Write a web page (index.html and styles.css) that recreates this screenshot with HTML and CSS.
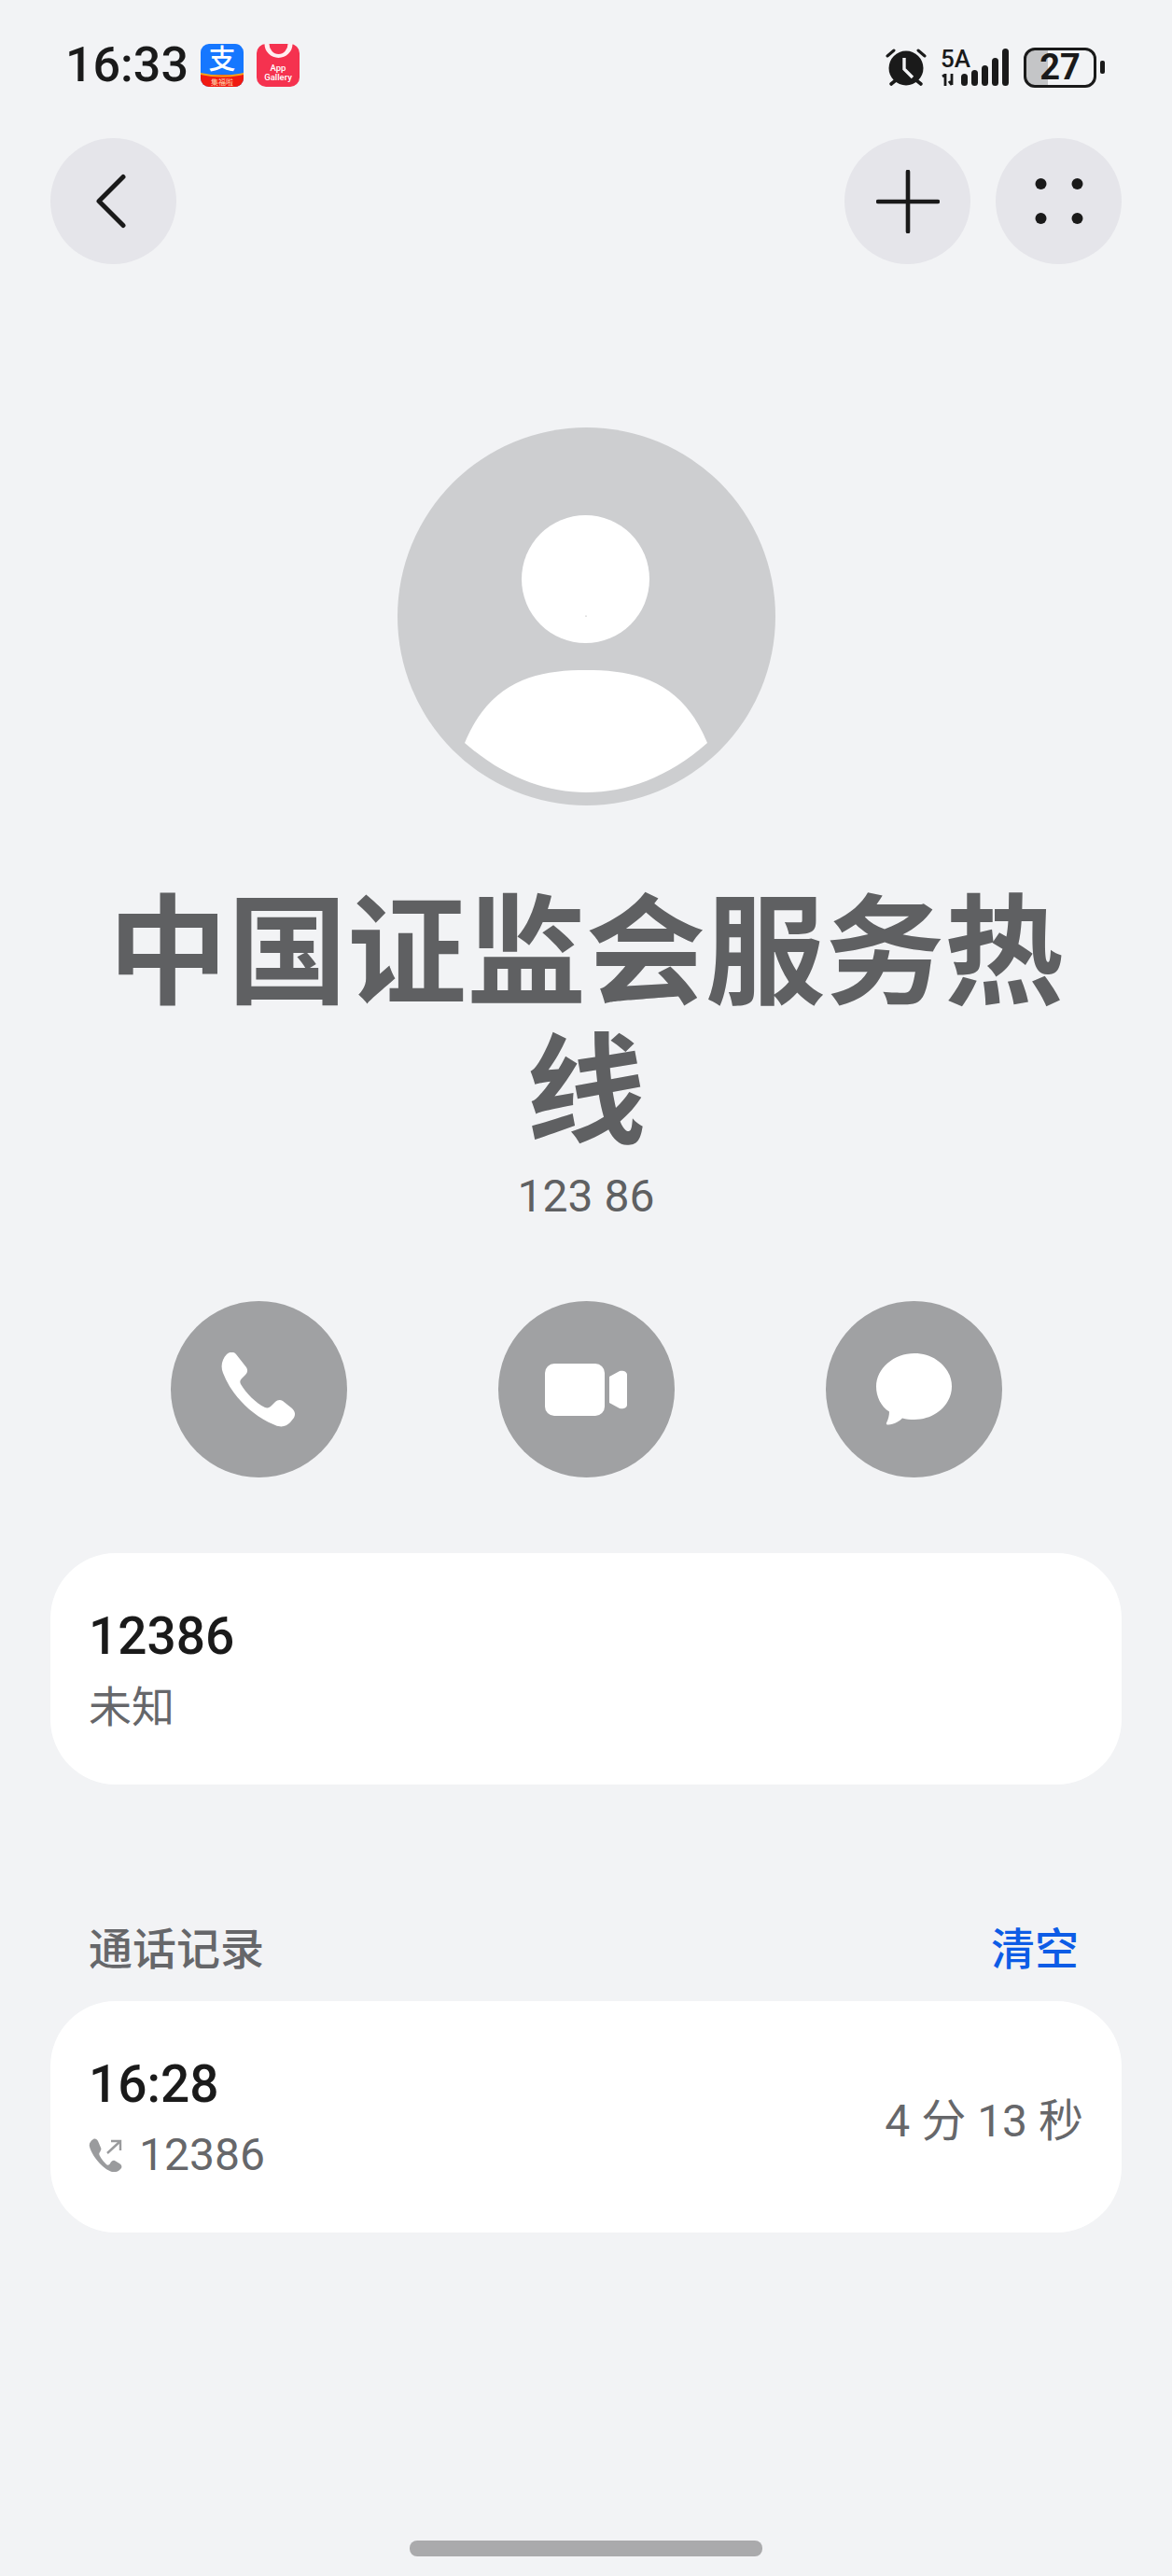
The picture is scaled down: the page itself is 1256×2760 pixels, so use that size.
FILE: index.html
```html
<!DOCTYPE html>
<html>
<head>
  <title>通话详情</title>
  <meta name="viewport" content="width=device-width, initial-scale=1.0">
  <link rel="stylesheet" href="styles.css">
</head>
<body>
  <div class="phone">

    <!-- Status bar -->
    <div class="status-bar">
      <div class="status-left">
        <span class="clock">16:33</span>
        <svg class="app-icon" viewBox="0 0 46 46">
          <rect width="46" height="46" rx="9" fill="#1677ff"/>
          <path d="M0 33h46v4a9 9 0 0 1-9 9H9a9 9 0 0 1-9-9z" fill="#f01a12"/>
          <path d="M0 31q23 5 46 0v2q-23 5-46 0z" fill="#f7a21b"/>
          <text x="23" y="27" text-anchor="middle" class="app-icon-glyph">支</text>
          <text x="23" y="44" text-anchor="middle" class="app-icon-tiny">集福啦</text>
        </svg>
        <svg class="app-icon" viewBox="0 0 46 46">
          <rect width="46" height="46" rx="10" fill="#f5324f"/>
          <path d="M8.500 0a15 15 0 0 0 30 0h-5a10 11 0 0 1-20 0z" fill="#fff" opacity=".92"/>
          <text x="23" y="29" text-anchor="middle" class="app-icon-label">App</text>
          <text x="23" y="38.500" text-anchor="middle" class="app-icon-label">Gallery</text>
        </svg>
      </div>
      <div class="status-right">
        <svg class="alarm" viewBox="0 0 44 42">
          <path d="M2 9l7-6M42 9l-7-6" stroke="#1a1a1a" stroke-width="3" stroke-linecap="round" fill="none"/>
          <path d="M6 39l5-4M38 39l-5-4" stroke="#1a1a1a" stroke-width="3.600" stroke-linecap="round" fill="none"/>
          <circle cx="22" cy="22" r="18.500" fill="#1a1a1a"/>
          <path d="M20 11v12l9 9" stroke="#f2f3f5" stroke-width="3.400" fill="none"/>
        </svg>
        <div class="signal">
          <div class="signal-text">
            <span class="signal-type">5A</span>
            <svg class="signal-arrows" viewBox="0 0 16 13">
              <path d="M2 3l3-2v12M12 0v12M9 8l3 4" stroke="#1a1a1a" stroke-width="2.800" fill="none"/>
            </svg>
          </div>
          <div class="signal-bars">
            <i class="bar bar-1"></i>
            <i class="bar bar-2"></i>
            <i class="bar bar-3"></i>
            <i class="bar bar-4"></i>
            <i class="bar bar-5"></i>
          </div>
        </div>
        <div class="battery">
          <div class="battery-body"><span class="battery-level">27</span></div>
          <div class="battery-cap"></div>
        </div>
      </div>
    </div>

    <!-- Top buttons -->
    <div class="top-bar">
      <div class="round-btn">
        <svg width="40" height="60" viewBox="0 0 40 60">
          <path d="M30 3.500L4 29.500l26 26" stroke="#1a1a1a" stroke-width="5" stroke-linecap="round" stroke-linejoin="round" fill="none"/>
        </svg>
      </div>
      <div class="top-actions">
        <div class="round-btn">
          <svg width="68" height="68" viewBox="0 0 68 68">
            <path d="M34 2v64M2 34h64" stroke="#1a1a1a" stroke-width="4.600" stroke-linecap="round" fill="none"/>
          </svg>
        </div>
        <div class="round-btn">
          <svg width="52" height="50" viewBox="0 0 52 50">
            <circle cx="6.500" cy="6" r="6" fill="#1a1a1a"/>
            <circle cx="45.500" cy="6" r="6" fill="#1a1a1a"/>
            <circle cx="6.500" cy="43" r="6" fill="#1a1a1a"/>
            <circle cx="45.500" cy="43" r="6" fill="#1a1a1a"/>
          </svg>
        </div>
      </div>
    </div>

    <!-- Contact header -->
    <div class="contact">
      <svg class="avatar" viewBox="0 0 405 405">
        <circle cx="202.500" cy="202.500" r="202.500" fill="#cdced0"/>
        <circle cx="201.500" cy="162.500" r="68.500" fill="#fff"/>
        <circle cx="202" cy="202" r=".6" fill="#999"/>
        <path d="M72 338C100 270 150 260 202 260S304 270 332 338C290 375 245 391 202 391s-88-16-130-53z" fill="#fff"/>
      </svg>
      <h1 class="contact-name">中国证监会服务热线</h1>
      <div class="contact-number">123 86</div>
    </div>

    <!-- Call, video, message -->
    <div class="actions">
      <div class="action-btn">
        <svg width="80" height="80" viewBox="0 0 80 80">
          <path d="M6 2C9-1 14-1 16 2L27 16C29 19 28 22 26 24L22 28C20 30 20 32 21 34 27 44 37 54 47 59 50 60 52 59 54 57L58 53C60 51 63 50 66 52L76 60C79 63 80 66 78 70L74 75C70 79 65 81 58 78 33 68 11 46 2 22-1 15 1 7 6 2z" fill="#fff"/>
        </svg>
      </div>
      <div class="action-btn">
        <svg width="88" height="56" viewBox="0 0 88 56">
          <rect x="0" y="0" width="64" height="56" rx="10" fill="#fff"/>
          <path d="M69 14l11-6c3-1 8 0 8 4v32c0 4-5 5-8 4l-11-6z" fill="#fff"/>
        </svg>
      </div>
      <div class="action-btn">
        <svg width="81" height="77" viewBox="0 0 81 77">
          <path d="M41 0c22 0 40 16 40 35.500S63 71 41 71c-5 0-9-.5-13-1.500-4 4-10 7-15 7-2 0-2.500-1-2-2 2-4 3-8 3-12C5 57 0 46 0 35.500 0 16 19 0 41 0z" fill="#fff"/>
        </svg>
      </div>
    </div>

    <!-- Number card -->
    <div class="card">
      <div class="card-text">
        <div class="card-title">12386</div>
        <div class="card-sub">未知</div>
      </div>
    </div>

    <!-- Call log -->
    <div class="section-head">
      <span class="section-title">通话记录</span>
      <span class="section-link">清空</span>
    </div>
    <div class="card card-log">
      <div class="card-text">
        <div class="card-title">16:28</div>
        <div class="card-sub card-sub-log">
          <svg class="call-out" viewBox="0 0 36 36">
            <path d="M5 1c2-1 4 0 5 2l3 7c1 2 0 3-1 5-1 1-1 2 0 4 2 4 5 7 7 9 1 1 3 1 4-1 1-2 3-4 5-3l5 3c2 1 3 3 2 5-2 3-6 5-10 4C15 33 3 18 1 9 0 6 2 3 5 1z" fill="#9a9b9d"/>
            <path d="M20 16L33 4M24 3h10v10" stroke="#9a9b9d" stroke-width="2.400" fill="none"/>
          </svg>
          <span>12386</span>
        </div>
      </div>
      <div class="call-length">4 分 13 秒</div>
    </div>

    <div class="home-bar"></div>
  </div>
</body>
</html>
```

FILE: styles.css
```css
/* Reset */
body, h1 {
  margin: 0;
  padding: 0;
}

body {
  font-family: Roboto, "Noto Sans CJK SC", sans-serif;
  background-color: #f2f3f5;
  color: #1a1a1a;
}

.phone {
  width: 1256px;
  height: 2760px;
  overflow: hidden;
  display: flex;
  flex-direction: column;
}

/* Status bar */
.status-bar {
  height: 140px;
  padding: 40px 72px 0 70px;
  box-sizing: border-box;
  display: flex;
  justify-content: space-between;
  align-items: flex-start;
}

.status-left {
  display: flex;
  align-items: center;
  height: 60px;
}

.clock {
  font-size: 52px;
  font-weight: 500;
  line-height: 60px;
  margin-right: 13px;
}

.app-icon {
  width: 46px;
  height: 46px;
  margin-right: 14px;
  overflow: visible;
}

.app-icon-glyph {
  font-size: 29px;
  font-weight: 500;
  fill: #fff;
  font-family: "Noto Sans CJK SC", sans-serif;
}

.app-icon-tiny {
  font-size: 8px;
  fill: #ffd9b0;
  font-family: "Noto Sans CJK SC", sans-serif;
}

.app-icon-label {
  font-size: 9.500px;
  font-weight: 500;
  fill: #fff;
}

.status-right {
  display: flex;
  align-items: center;
  height: 60px;
  margin-top: 2px;
}

.alarm {
  width: 44px;
  height: 42px;
  margin-right: 15px;
}

.signal {
  display: flex;
  align-items: flex-end;
  margin-right: 16px;
}

.signal-text {
  display: flex;
  flex-direction: column;
  width: 22px;
}

.signal-type {
  font-size: 26px;
  line-height: 22px;
  font-weight: 500;
}

.signal-arrows {
  width: 16px;
  height: 13px;
  margin-top: 5px;
}

.signal-bars {
  display: flex;
  align-items: flex-end;
  gap: 4px;
}

.bar {
  display: block;
  width: 7px;
  background-color: #1a1a1a;
  border-radius: 3.500px;
}

.bar-1 { height: 13px; }
.bar-2 { height: 17px; }
.bar-3 { height: 22px; }
.bar-4 { height: 30px; }
.bar-5 { height: 40px; }

.battery {
  display: flex;
  align-items: center;
}

.battery-body {
  width: 78px;
  height: 43px;
  box-sizing: border-box;
  border: 3.500px solid #1a1a1a;
  border-radius: 12px;
  background: linear-gradient(to right, #c4c5c7 32%, transparent 32%);
  display: flex;
  align-items: center;
  justify-content: center;
}

.battery-level {
  font-size: 38px;
  font-weight: 700;
  line-height: 36px;
}

.battery-cap {
  width: 5px;
  height: 14px;
  margin-left: 4px;
  background-color: #1a1a1a;
  border-radius: 2px;
}

/* Top buttons */
.top-bar {
  padding: 8px 54px 0 54px;
  display: flex;
  justify-content: space-between;
}

.top-actions {
  display: flex;
  gap: 27px;
}

.round-btn {
  width: 135px;
  height: 135px;
  border-radius: 50%;
  background-color: #e5e5ea;
  display: flex;
  align-items: center;
  justify-content: center;
}

/* Contact header */
.contact {
  display: flex;
  flex-direction: column;
  align-items: center;
  padding-top: 175px;
}

.avatar {
  width: 405px;
  height: 405px;
  display: block;
}

.contact-name {
  width: 1040px;
  margin-top: 73px;
  font-size: 128px;
  line-height: 149px;
  font-weight: 700;
  color: #5f6062;
  text-align: center;
  font-family: "Noto Sans CJK SC", sans-serif;
}

.contact-number {
  margin-top: 20px;
  font-size: 48px;
  line-height: 56px;
  color: #5f6062;
}

/* Call, video, message */
.actions {
  display: flex;
  justify-content: center;
  gap: 162px;
  margin-top: 84px;
}

.action-btn {
  width: 189px;
  height: 189px;
  border-radius: 50%;
  background-color: #a0a1a3;
  display: flex;
  align-items: center;
  justify-content: center;
}

/* Cards */
.card {
  margin: 81px 54px 0 54px;
  height: 248px;
  padding: 0 41px;
  box-sizing: border-box;
  background-color: #fff;
  border-radius: 70px;
  display: flex;
  align-items: center;
  justify-content: space-between;
}

.card-text {
  padding-top: 3px;
}

.card-title {
  font-size: 55px;
  line-height: 66px;
  font-weight: 500;
  color: #1a1a1a;
}

.card-sub {
  margin-top: 13px;
  font-size: 46px;
  line-height: 60px;
  color: #66676a;
}

.card-sub-log {
  display: flex;
  align-items: center;
  gap: 18px;
  font-size: 48px;
}

.call-out {
  width: 36px;
  height: 36px;
}

.call-length {
  font-size: 48px;
  color: #66676a;
}

/* Call log heading */
.section-head {
  margin: 0 100px 0 95px;
  padding-top: 142px;
  display: flex;
  justify-content: space-between;
  align-items: center;
  height: 60px;
}

.section-title {
  font-size: 47px;
  font-weight: 500;
  color: #66676a;
}

.section-link {
  font-size: 47px;
  font-weight: 500;
  color: #0d5ce6;
}

.card-log {
  margin-top: 30px;
}

.home-bar {
  width: 378px;
  height: 17px;
  margin: auto auto 21px auto;
  border-radius: 8px;
  background-color: #aaaaac;
}
```
